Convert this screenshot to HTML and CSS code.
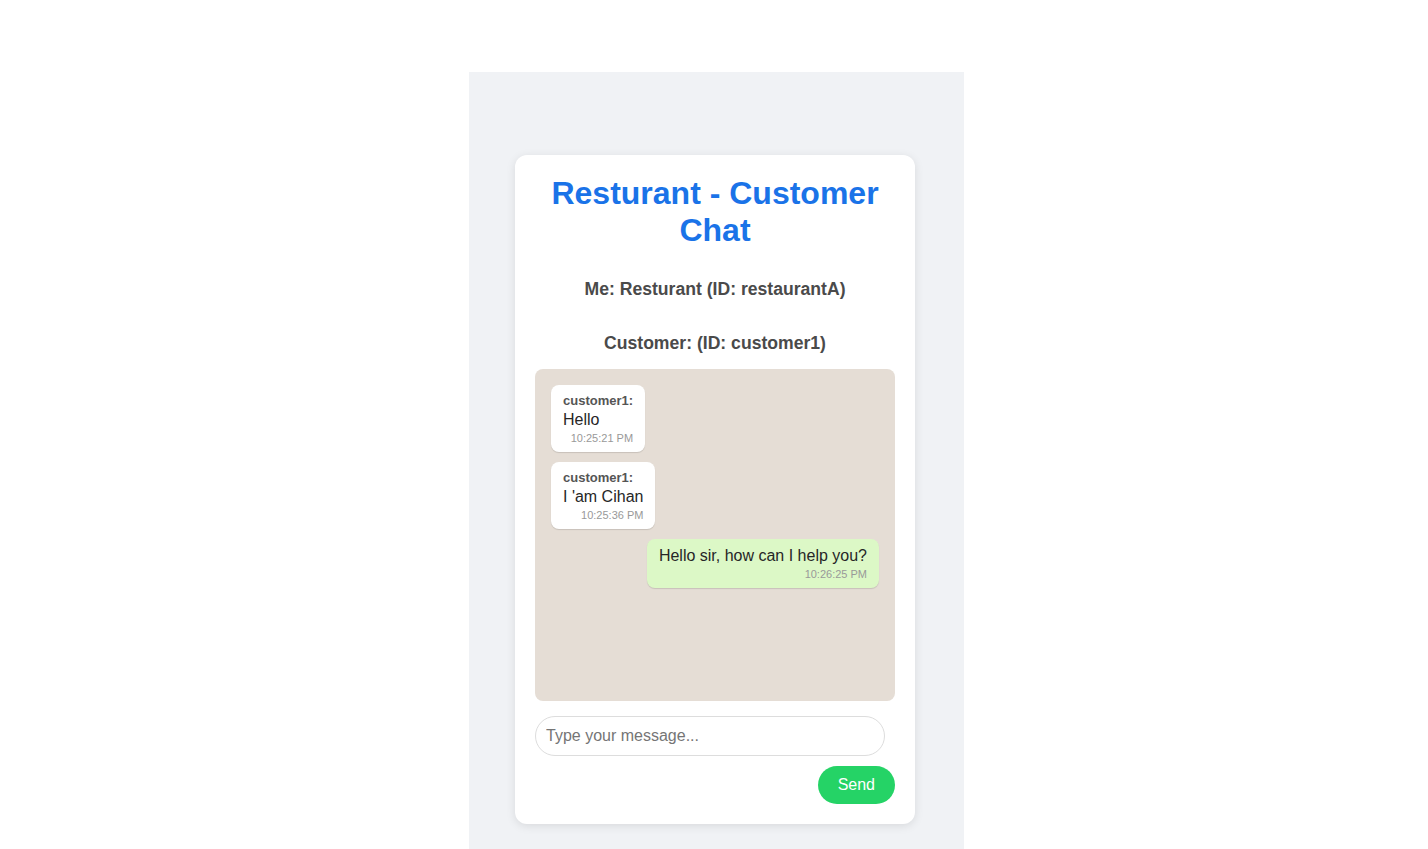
FILE: index.html
```html
<!DOCTYPE html>
<html lang="en">
<head>
<meta charset="utf-8">
<title>Resturant - Customer Chat</title>
<link rel="stylesheet" href="styles.css">
</head>
<body>
<div class="panel">
  <div class="card">
    <h1 class="title">Resturant - Customer Chat</h1>
    <h3 class="who who-me">Me: Resturant (ID: restaurantA)</h3>
    <h3 class="who who-customer">Customer: (ID: customer1)</h3>
    <div class="chat">
      <div class="msg msg-them">
        <div class="sender">customer1:</div>
        <div class="text">Hello</div>
        <div class="time">10:25:21 PM</div>
      </div>
      <div class="msg msg-them">
        <div class="sender">customer1:</div>
        <div class="text">I 'am Cihan</div>
        <div class="time">10:25:36 PM</div>
      </div>
      <div class="msg msg-me">
        <div class="text">Hello sir, how can I help you?</div>
        <div class="time">10:26:25 PM</div>
      </div>
    </div>
    <div class="composer">
      <input class="input" type="text" placeholder="Type your message...">
      <button class="send" type="button">Send</button>
    </div>
  </div>
</div>
</body>
</html>
```

FILE: styles.css
```css
html, body {
  margin: 0;
  padding: 0;
  background: #ffffff;
  font-family: "Liberation Sans", Arial, sans-serif;
}

body {
  padding-top: 72px;
  height: 849px;
  box-sizing: border-box;
  overflow: hidden;
}

.panel {
  margin-left: 469px;
  width: 495px;
  height: 777px;
  background: #f0f2f5;
  padding-top: 83px;
  box-sizing: border-box;
}

.card {
  width: 400px;
  margin-left: 46px;
  background: #ffffff;
  border-radius: 12px;
  box-shadow: 0 2px 10px rgba(0, 0, 0, 0.1);
  padding: 20px;
  box-sizing: border-box;
  display: flex;
  flex-direction: column;
}

.title {
  margin: 0;
  font-size: 32px;
  font-weight: bold;
  line-height: 37px;
  color: #1a73e8;
  text-align: center;
}

.who {
  margin: 0;
  font-size: 17.6px;
  font-weight: bold;
  line-height: 21.5px;
  color: #4a4a4a;
  text-align: center;
}

.who-me {
  margin-top: 30px;
}

.who-customer {
  margin-top: 32.5px;
}

.chat {
  margin-top: 14px;
  height: 332px;
  background: #e5ddd5;
  border-radius: 8px;
  padding: 16px;
  box-sizing: border-box;
  display: flex;
  flex-direction: column;
  align-items: flex-start;
  gap: 10px;
}

.msg {
  border-radius: 8px;
  padding: 8px 12px 7px;
  box-shadow: 0 1px 1px rgba(0, 0, 0, 0.13);
  display: flex;
  flex-direction: column;
  color: #262626;
}

.msg-them {
  background: #ffffff;
}

.msg-me {
  background: #dcf8c6;
  align-self: flex-end;
}

.sender {
  margin-bottom: 3px;
  font-size: 13px;
  font-weight: bold;
  line-height: 15px;
  color: #555555;
}

.text {
  font-size: 16px;
  line-height: 18.4px;
}

.time {
  margin-top: 3px;
  font-size: 11px;
  line-height: 12.6px;
  color: #999999;
  text-align: right;
}

.composer {
  margin-top: 15px;
  display: flex;
  flex-direction: column;
  align-items: flex-end;
  gap: 10px;
}

.input {
  align-self: flex-start;
  width: 350px;
  height: 40px;
  box-sizing: border-box;
  border: 1px solid #dddddd;
  border-radius: 20px;
  padding: 0 10px;
  font-family: "Liberation Sans", Arial, sans-serif;
  font-size: 16px;
  color: #222222;
  outline: none;
  background: #ffffff;
}

.input::placeholder {
  color: #757575;
}

.send {
  height: 38px;
  padding: 0 20px;
  border: none;
  border-radius: 19px;
  background: #25d366;
  color: #ffffff;
  font-family: "Liberation Sans", Arial, sans-serif;
  font-size: 16px;
  cursor: pointer;
}
```
